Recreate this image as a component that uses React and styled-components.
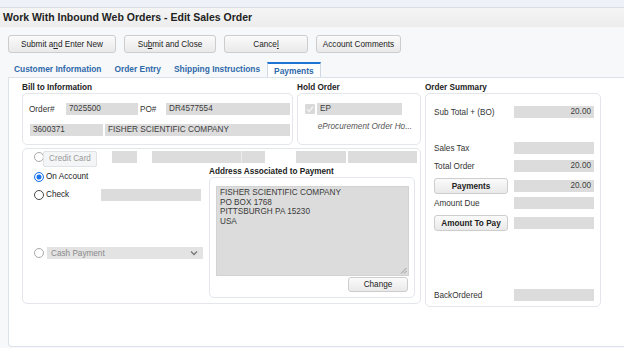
import React from "react";
import styled, { createGlobalStyle } from "styled-components";

const GlobalStyle = createGlobalStyle`
  body {
    margin: 0;
    background: #f7f8fa;
    font-family: "Liberation Sans", Arial, sans-serif;
    font-size: 8.2px;
    color: #333;
  }
  * { box-sizing: border-box; }
`;

export default function App() {
  return (
    <>
      <GlobalStyle />
      <Page>
        <TopStrip />
        <TitleBar>Work With Inbound Web Orders - Edit Sales Order</TitleBar>
        <Toolbar>
          <ToolButton $w={108}>
            Submit a<u>n</u>d Enter New
          </ToolButton>
          <ToolButton $w={92}>
            Su<u>b</u>mit and Close
          </ToolButton>
          <ToolButton $w={84}>
            Cance<u>l</u>
          </ToolButton>
          <ToolButton $w={85}>Account Comments</ToolButton>
        </Toolbar>
        <Tabs>
          <Tab>Customer Information</Tab>
          <Tab>Order Entry</Tab>
          <Tab>Shipping Instructions</Tab>
          <Tab $active>Payments</Tab>
        </Tabs>
        <Panel>
          <LeftCol>
            <TopRow>
              <Group>
                <SectionTitle>Bill to Information</SectionTitle>
                <BillBox>
                  <Row>
                    <Label $w={37}>Order#</Label>
                    <Field $w={72}>7025500</Field>
                    <Label $w={26} $ml={2}>
                      PO#
                    </Label>
                    <Field $w={124}>DR4577554</Field>
                  </Row>
                  <Row $mt={9}>
                    <Field $w={73} $ml={1}>3600371</Field>
                    <Field $w={185} $ml={2}>
                      FISHER SCIENTIFIC COMPANY
                    </Field>
                  </Row>
                </BillBox>
              </Group>
              <Group>
                <SectionTitle>Hold Order</SectionTitle>
                <HoldBox>
                  <Row>
                    <svg width="10" height="10" viewBox="0 0 10 10">
                      <rect x="0" y="0" width="10" height="10" rx="1" fill="#d9d9d9" />
                      <polyline
                        points="2,5.2 4.2,7.4 8,2.6"
                        fill="none"
                        stroke="#f4f4f4"
                        strokeWidth="1.4"
                      />
                    </svg>
                    <Field $w={85} $ml={2}>
                      EP
                    </Field>
                  </Row>
                  <HoldNote>eProcurement Order Ho...</HoldNote>
                </HoldBox>
              </Group>
            </TopRow>
            <PaymentBox>
              <CardRow>
                <Radio $disabled />
                <CardButton>Credit Card</CardButton>
                <Field $w={25} $ml={15} />
                <Field $w={89} $ml={15} />
                <Field $w={24} $ml={0} $divider />
                <Field $w={50} $ml={31} />
                <Field $w={69} $ml={2} />
              </CardRow>
              <PaymentBody>
                <MethodCol>
                  <Row $mt={5}>
                    <Radio $checked />
                    <MethodLabel>On Account</MethodLabel>
                  </Row>
                  <Row $mt={7}>
                    <Radio />
                    <MethodLabel $w={55}>Check</MethodLabel>
                    <Field $w={100} />
                  </Row>
                  <Row $mt={46}>
                    <Radio $disabled />
                    <Select>
                      <span>Cash Payment</span>
                      <svg width="8" height="6" viewBox="0 0 8 6">
                        <polyline
                          points="1,1.5 4,4.5 7,1.5"
                          fill="none"
                          stroke="#777"
                          strokeWidth="1.3"
                        />
                      </svg>
                    </Select>
                  </Row>
                </MethodCol>
                <AddressGroup>
                  <SectionTitle>Address Associated to Payment</SectionTitle>
                  <AddressBox>
                    <AddressText>
                      FISHER SCIENTIFIC COMPANY
                      <br />
                      PO BOX 1768
                      <br />
                      PITTSBURGH PA 15230
                      <br />
                      USA
                      <Grip width="7" height="7" viewBox="0 0 7 7">
                        <line x1="6.5" y1="1" x2="1" y2="6.5" stroke="#888" strokeWidth="0.8" />
                        <line x1="6.5" y1="4" x2="4" y2="6.5" stroke="#888" strokeWidth="0.8" />
                      </Grip>
                    </AddressText>
                    <ChangeButton>Change</ChangeButton>
                  </AddressBox>
                </AddressGroup>
              </PaymentBody>
            </PaymentBox>
          </LeftCol>
          <Group>
            <SectionTitle>Order Summary</SectionTitle>
            <SummaryBox>
              <SumRow>
                <SumLabel>Sub Total + (BO)</SumLabel>
                <Field $w={80} $right>
                  20.00
                </Field>
              </SumRow>
              <SumRow $mt={24}>
                <SumLabel>Sales Tax</SumLabel>
                <Field $w={80} $right />
              </SumRow>
              <SumRow $mt={6}>
                <SumLabel>Total Order</SumLabel>
                <Field $w={80} $right>
                  20.00
                </Field>
              </SumRow>
              <SumRow $mt={6} $h={16}>
                <SumButton>Payments</SumButton>
                <Field $w={80} $right>
                  20.00
                </Field>
              </SumRow>
              <SumRow $mt={3}>
                <SumLabel>Amount Due</SumLabel>
                <Field $w={80} $right />
              </SumRow>
              <SumRow $mt={6} $h={16}>
                <SumButton>Amount To Pay</SumButton>
                <Field $w={80} $right />
              </SumRow>
              <SumRow $mt={58}>
                <SumLabel>BackOrdered</SumLabel>
                <Field $w={80} $right />
              </SumRow>
            </SummaryBox>
          </Group>
        </Panel>
      </Page>
    </>
  );
}

const Page = styled.div`
  width: 624px;
  height: 348px;
  overflow: hidden;
  background: #f7f8fa;
`;

const TopStrip = styled.div`
  height: 8px;
  background: #eef1f7;
  border-bottom: 1px solid #d9dde4;
`;

const TitleBar = styled.div`
  height: 19px;
  line-height: 19px;
  padding-left: 3px;
  background: linear-gradient(#f5f5f5, #ececec);
  font-size: 10.5px;
  font-weight: bold;
  color: #222;
`;

const Toolbar = styled.div`
  display: flex;
  gap: 8px;
  padding: 8px 0 0 8px;
`;

const ButtonBase = styled.div`
  display: flex;
  align-items: center;
  justify-content: center;
  background: linear-gradient(#fbfbfb, #e9e9e9);
  border: 1px solid #cdcdcd;
  border-radius: 3px;
  color: #222;
  white-space: nowrap;
  u {
    text-decoration: underline;
  }
`;

const ToolButton = styled(ButtonBase)`
  width: ${(p) => p.$w}px;
  height: 18px;
  font-size: 8.2px;
`;

const Tabs = styled.div`
  display: flex;
  gap: 1px;
  height: 15px;
  margin-top: 9px;
  padding-left: 8px;
  position: relative;
  z-index: 1;
`;

const Tab = styled.div`
  height: 15px;
  padding: 0 6px;
  line-height: ${(p) => (p.$active ? "13px" : "15px")};
  font-size: 8.4px;
  font-weight: bold;
  color: #2f6aaa;
  background: ${(p) => (p.$active ? "#fff" : "transparent")};
  border: ${(p) => (p.$active ? "1px solid #cfd8e3" : "none")};
  border-top: ${(p) => (p.$active ? "2px solid #1d75d1" : "none")};
  border-bottom: none;
  padding-top: ${(p) => (p.$active ? "1px" : "0")};
`;

const Panel = styled.div`
  display: flex;
  gap: 4px;
  margin: 0 0 0 8px;
  height: 270px;
  background: #fff;
  border: 1px solid #dce2e9;
  border-right: none;
  border-radius: 0 0 0 4px;
  padding: 5px 0 0 13px;
`;

const LeftCol = styled.div`
  width: 399px;
  display: flex;
  flex-direction: column;
`;

const TopRow = styled.div`
  display: flex;
  gap: 4px;
`;

const Group = styled.div`
  display: flex;
  flex-direction: column;
`;

const SectionTitle = styled.div`
  height: 10px;
  line-height: 10px;
  font-size: 8.2px;
  font-weight: bold;
  color: #222;
  white-space: nowrap;
`;

const Box = styled.div`
  background: #fff;
  border: 1px solid #e3e6ea;
  border-radius: 5px;
`;

const BillBox = styled(Box)`
  width: 271px;
  height: 52px;
  padding: 9px 0 0 6px;
`;

const HoldBox = styled(Box)`
  width: 124px;
  height: 52px;
  padding: 9px 0 0 7px;
`;

const HoldNote = styled.div`
  margin-top: 7px;
  padding-right: 8px;
  text-align: right;
  font-style: italic;
  color: #555;
  line-height: 10px;
  white-space: nowrap;
`;

const Row = styled.div`
  display: flex;
  align-items: center;
  margin-top: ${(p) => p.$mt || 0}px;
`;

const Label = styled.div`
  width: ${(p) => p.$w}px;
  margin-left: ${(p) => p.$ml || 0}px;
  color: #333;
  white-space: nowrap;
`;

const Field = styled.div`
  flex: none;
  width: ${(p) => p.$w}px;
  height: 12px;
  margin-left: ${(p) => p.$ml || 0}px;
  padding: 0 3px;
  background: #dcdcdc;
  border-left: ${(p) => (p.$divider ? "1px solid #ececec" : "none")};
  color: #3c3c3c;
  line-height: 12px;
  text-align: ${(p) => (p.$right ? "right" : "left")};
  white-space: nowrap;
  overflow: hidden;
`;

const PaymentBox = styled(Box)`
  margin-top: 3px;
  width: 399px;
  height: 156px;
  padding: 2px 0 0 11px;
`;

const CardRow = styled.div`
  display: flex;
  align-items: flex-start;
  height: 16px;
  & > div:first-child {
    margin-top: 1px;
  }
`;

const Radio = styled.div`
  flex: none;
  width: 10px;
  height: 10px;
  border-radius: 50%;
  background: #fff;
  border: 1px solid
    ${(p) => (p.$checked ? "#1a73e8" : p.$disabled ? "#a9a9a9" : "#4a4a4a")};
  box-shadow: ${(p) => (p.$checked ? "inset 0 0 0 1.5px #fff, inset 0 0 0 5px #1a73e8" : "none")};
`;

const CardButton = styled.div`
  width: 54px;
  height: 16px;
  margin-left: -1px;
  line-height: 14px;
  text-align: center;
  background: #f4f5f6;
  border: 1px solid #e0e3e6;
  border-radius: 2px;
  color: #9a9a9a;
  position: relative;
`;

const PaymentBody = styled.div`
  display: flex;
`;

const MethodCol = styled.div`
  width: 175px;
  display: flex;
  flex-direction: column;
`;

const MethodLabel = styled.div`
  width: ${(p) => (p.$w ? `${p.$w}px` : "auto")};
  margin-left: 2px;
  color: #222;
  line-height: 10px;
`;

const Select = styled.div`
  width: 156px;
  height: 12px;
  margin-left: 3px;
  padding: 0 5px 0 4px;
  display: flex;
  align-items: center;
  justify-content: space-between;
  background: #e3e3e3;
  color: #8a8a8a;
`;

const AddressGroup = styled.div`
  display: flex;
  flex-direction: column;
`;

const AddressBox = styled(Box)`
  width: 206px;
  height: 121px;
  padding: 8px 0 0 6px;
  display: flex;
  flex-direction: column;
`;

const AddressText = styled.div`
  position: relative;
  width: 193px;
  height: 90px;
  padding: 1px 3px;
  background: #dcdcdc;
  border: 1px solid #d2d2d2;
  color: #3a3a3a;
  line-height: 9.5px;
`;

const Grip = styled.svg`
  position: absolute;
  right: 1px;
  bottom: 1px;
`;

const ChangeButton = styled(ButtonBase)`
  align-self: flex-end;
  width: 60px;
  height: 15px;
  margin: 1px 6px 0 0;
  font-size: 8.2px;
`;

const SummaryBox = styled(Box)`
  width: 176px;
  height: 214px;
  padding: 12px 6px 0 8px;
  display: flex;
  flex-direction: column;
`;

const SumRow = styled.div`
  display: flex;
  align-items: center;
  justify-content: space-between;
  height: ${(p) => p.$h || 12}px;
  margin-top: ${(p) => p.$mt || 0}px;
`;

const SumLabel = styled.div`
  color: #333;
  white-space: nowrap;
`;

const SumButton = styled(ButtonBase)`
  width: 74px;
  height: 16px;
  font-size: 8.2px;
  font-weight: bold;
  color: #222;
`;
